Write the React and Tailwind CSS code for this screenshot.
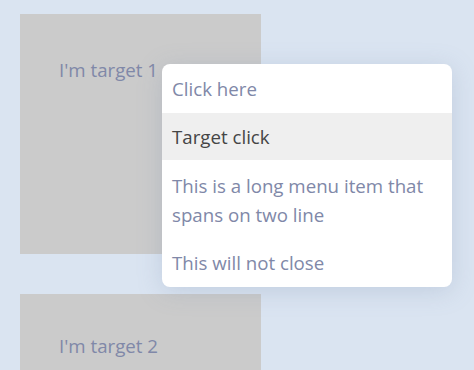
export default function App() {
  const font = { fontFamily: "'Open Sans', 'Noto Sans', sans-serif" };
  return (
    <main
      className="relative h-[370px] w-[474px] overflow-hidden bg-[#dae4f1] pl-5 pt-[14px]"
      style={font}
    >
      <div className="flex flex-col gap-10">
        <div className="h-[240px] w-[241px] bg-[#cbcbcb] pl-[39px] pt-[42px] text-[18.7px] leading-7 text-[#8088a8]">
          I'm target 1
        </div>
        <div className="h-[240px] w-[241px] bg-[#cbcbcb] pl-[39px] pt-[38px] text-[18.7px] leading-7 text-[#8088a8]">
          I'm target 2
        </div>
      </div>

      {/* Open menu */}
      <div className="absolute left-[162px] top-[64px] w-[290px] overflow-hidden rounded-lg bg-white text-[18.7px] leading-[29px] text-[#8088a8] shadow-[0_4px_24px_rgba(120,140,170,0.25)]">
        <div className="px-[10px] pb-[10px] pt-[10px]">Click here</div>
        <div className="bg-[#efefef] px-[10px] py-[9px] text-[#454545]">Target click</div>
        <div className="px-[10px] py-[11px] pr-6">This is a long menu item that spans on two line</div>
        <div className="px-[10px] pb-[10px] pt-[8px]">This will not close</div>
      </div>
    </main>
  );
}
